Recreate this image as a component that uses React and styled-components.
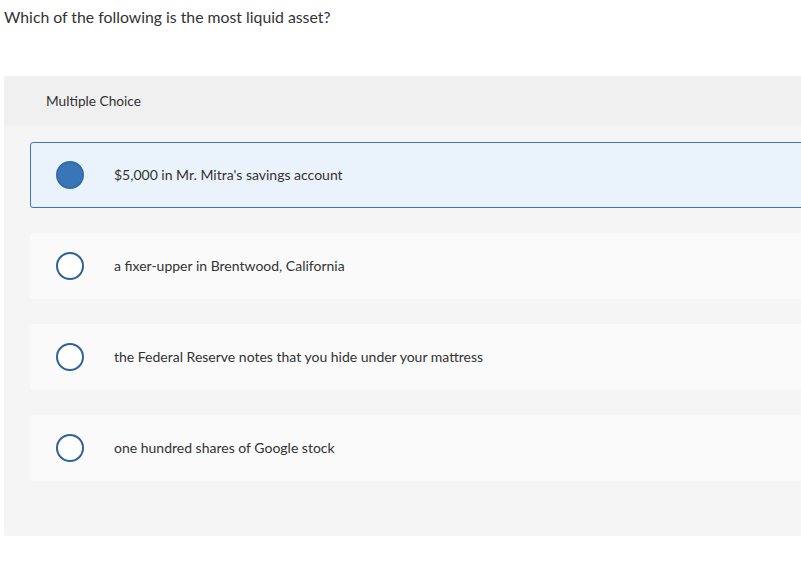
import React from "react";
import styled, { createGlobalStyle } from "styled-components";

const Global = createGlobalStyle`
  html, body { margin: 0; padding: 0; background: #fff; overflow: hidden; }
  body { font-family: "Lato", "Liberation Sans", sans-serif; color: #333; }
`;

const Page = styled.div`
  width: 801px;
  height: 582px;
  overflow: hidden;
  padding-top: 7px;
  box-sizing: border-box;
`;

const Question = styled.p`
  margin: 0 0 0 4px;
  font-size: 15.8px;
  line-height: 19px;
  color: #333;
`;

const Panel = styled.section`
  margin: 50px 0 0 4px;
  width: 830px;
  background: #f5f5f5;
  border-radius: 3px;
  padding-bottom: 55px;
`;

const Header = styled.div`
  height: 50px;
  box-sizing: border-box;
  padding-bottom: 2px;
  background: #f0f0f0;
  border-radius: 3px 3px 0 0;
  display: flex;
  align-items: center;
  padding-left: 42px;
  font-size: 13.7px;
  color: #333;
`;

const Options = styled.div`
  display: flex;
  flex-direction: column;
  gap: 25px;
  padding: 16px 0 0 26px;
`;

const Option = styled.label`
  height: 66px;
  box-sizing: border-box;
  display: flex;
  align-items: center;
  padding-left: 25px;
  border-radius: 3px;
  border: 1px solid ${(p) => (p.$selected ? "#3a77bc" : "transparent")};
  background: ${(p) => (p.$selected ? "#eaf2fb" : "#fafafa")};
  cursor: pointer;
`;

const Radio = styled.span`
  width: 28px;
  height: 28px;
  box-sizing: border-box;
  border-radius: 50%;
  flex: none;
  border: 2px solid #2f6299;
  background: ${(p) => (p.$selected ? "#3a75b8" : "#fff")};
  ${(p) => p.$selected && "border-color: #336ca8;"}
`;

const OptionText = styled.span`
  margin: 0 0 2px 30px;
  font-size: 14px;
  color: #333;
`;

const choices = [
  "$5,000 in Mr. Mitra's savings account",
  "a fixer-upper in Brentwood, California",
  "the Federal Reserve notes that you hide under your mattress",
  "one hundred shares of Google stock",
];

export default function App() {
  return (
    <Page>
      <Global />
      <Question>Which of the following is the most liquid asset?</Question>
      <Panel>
        <Header>Multiple Choice</Header>
        <Options>
          {choices.map((c, i) => (
            <Option key={c} $selected={i === 0}>
              <Radio $selected={i === 0} />
              <OptionText>{c}</OptionText>
            </Option>
          ))}
        </Options>
      </Panel>
    </Page>
  );
}
